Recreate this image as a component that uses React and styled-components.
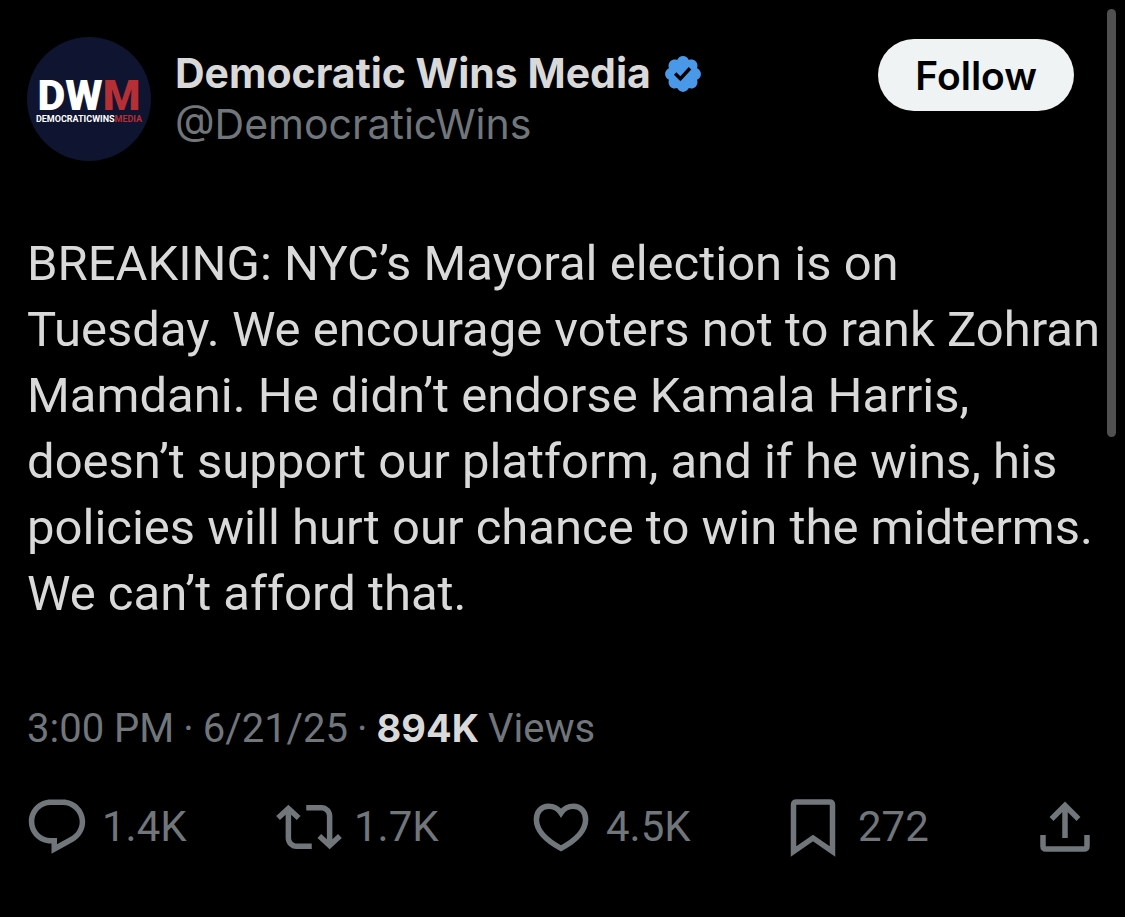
import styled, { createGlobalStyle } from "styled-components"

const GlobalStyle = createGlobalStyle`
    * {
        box-sizing: border-box;
    }
    body {
        margin: 0;
        background-color: #000;
        font-family: Roboto, "Liberation Sans", sans-serif;
    }
`
const Page = styled.main`
    position: relative;
    min-height: 100vh;
    background-color: #000;
`
const Post = styled.article`
    padding: 37px 24px 56px 27px;
`
const ScrollThumb = styled.div`
    position: absolute;
    top: 9px;
    right: 9px;
    width: 9px;
    height: 428px;
    border-radius: 5px;
    background-color: #505050;
`
const Header = styled.header`
    display: flex;
    align-items: flex-start;
`
const Avatar = styled.svg`
    flex: none;
    width: 124px;
    height: 124px;
    margin-right: 24px;
`
const Author = styled.div`
    flex: 1;
    min-width: 0;
    padding-top: 11px;
    font-family: Inter, "Liberation Sans", sans-serif;
    font-size: 41px;
    line-height: 51px;
`
const Name = styled.h1`
    display: flex;
    align-items: center;
    gap: 11px;
    margin: 0;
    font-size: inherit;
    font-weight: 700;
    color: #d9d9d9;
`
const Badge = styled.svg`
    flex: none;
    width: 42px;
    height: 42px;
    fill: #4a99e9;
`
const Handle = styled.a`
    display: block;
    color: #71767b;
    text-decoration: none;
`
const FollowButton = styled.button`
    height: 72px;
    margin: 2px 27px 0 0;
    padding: 0 37px;
    border: none;
    border-radius: 36px;
    background-color: #eff3f4;
    color: #000;
    font-family: Inter, "Liberation Sans", sans-serif;
    font-size: 39px;
    font-weight: 600;
    cursor: pointer;
`
const Text = styled.p`
    margin: 70px 0 0;
    font-size: 49px;
    line-height: 66px;
    color: #d9d9d9;
`
const Meta = styled.p`
    display: flex;
    align-items: baseline;
    gap: 9px;
    margin: 73px 0 0;
    font-size: 40px;
    line-height: 56px;
    color: #71767b;
`
const ViewCount = styled.strong`
    font-family: Inter, "Liberation Sans", sans-serif;
    font-size: 38px;
    font-weight: 700;
    color: #d9d9d9;
`
const Actions = styled.div`
    display: grid;
    grid-template-columns: repeat(4, 1fr) auto;
    margin: 37px 3px 0 -3px;
`
const Action = styled.button`
    display: flex;
    align-items: center;
    gap: 12px;
    padding: 0;
    border: none;
    background: none;
    color: #71767b;
    font-family: inherit;
    font-size: 42px;
    line-height: 66px;
    cursor: pointer;
`
const Icon = styled.svg`
    flex: none;
    width: 66px;
    height: 66px;
    fill: ${(props) => (props.$outline ? "none" : "currentColor")};
    stroke: ${(props) => (props.$outline ? "currentColor" : "none")};
    stroke-width: 5.5;
`

const ReplyIcon = () => (
  <Icon viewBox="0 0 24 24">
    <path d="M1.751 10c0-4.42 3.584-8 8.005-8h4.366c4.49 0 8.129 3.64 8.129 8.13 0 2.96-1.607 5.68-4.196 7.11l-8.054 4.46v-3.69h-.067c-4.49.1-8.183-3.51-8.183-8.01zm8.005-6c-3.317 0-6.005 2.69-6.005 6 0 3.37 2.77 6.08 6.138 6.01l.351-.01h1.761v2.3l5.087-2.81c1.951-1.08 3.163-3.13 3.163-5.36 0-3.39-2.744-6.13-6.129-6.13H9.756z" />
  </Icon>
)
const RepostIcon = () => (
  <Icon viewBox="0 0 24 24">
    <path d="M4.5 3.88l4.432 4.14-1.364 1.46L5.5 7.55V16c0 1.1.896 2 2 2H13v2H7.5c-2.209 0-4-1.79-4-4V7.55L1.432 9.48.068 8.02 4.5 3.88zM16.5 6H11V4h5.5c2.209 0 4 1.79 4 4v8.45l2.068-1.93 1.364 1.46-4.432 4.14-4.432-4.14 1.364-1.46 2.068 1.93V8c0-1.1-.896-2-2-2z" />
  </Icon>
)
const LikeIcon = () => (
  <Icon viewBox="0 0 66 66" $outline>
    <path d="M33 19C30 14.5 25.5 12.3 20.5 12.3C13 12.3 8.4 18 8.4 25.5C8.4 37 17.5 46 33 54.3C48.5 46 57.6 37 57.6 25.5C57.6 18 53 12.3 45.5 12.3C40.5 12.3 36 14.5 33 19Z" />
  </Icon>
)
const BookmarkIcon = () => (
  <Icon viewBox="0 0 66 66" $outline>
    <path d="M13.5 57.5V11Q13.5 8 16.5 8H49.5Q52.5 8 52.5 11V57.5L33 44Z" />
  </Icon>
)
const ShareIcon = () => (
  <Icon viewBox="0 0 66 66" $outline>
    <path d="M33 44V11M19.5 25L33 11.5L46.5 25M11 41V52Q11 55 14 55H52Q55 55 55 52V41" />
  </Icon>
)

const actions = [
  { label: "Reply", count: "1.4K", icon: <ReplyIcon /> },
  { label: "Repost", count: "1.7K", icon: <RepostIcon /> },
  { label: "Like", count: "4.5K", icon: <LikeIcon /> },
  { label: "Bookmark", count: "272", icon: <BookmarkIcon /> },
  { label: "Share", icon: <ShareIcon /> },
]

const App = () => {
  return (
    <Page>
      <GlobalStyle />
      <Post>
        <Header>
          <Avatar viewBox="0 0 124 124">
            <circle cx="62" cy="62" r="62" fill="#0f1430" />
            <text x="62" y="73" fontSize="43" fontWeight="900" textAnchor="middle" fill="#fff">
              DW<tspan fill="#b52f35">M</tspan>
            </text>
            <text x="62" y="85" fontSize="9" fontWeight="700" textAnchor="middle" fill="#fff">
              DEMOCRATICWINS<tspan fill="#b52f35">MEDIA</tspan>
            </text>
          </Avatar>
          <Author>
            <Name>
              Democratic Wins Media
              <Badge viewBox="0 0 24 24">
                <path d="M22.25 12c0-1.43-.88-2.67-2.19-3.34.46-1.39.2-2.9-.81-3.91s-2.52-1.27-3.91-.81c-.66-1.31-1.91-2.19-3.34-2.19s-2.67.88-3.33 2.19c-1.4-.46-2.91-.2-3.92.81s-1.26 2.52-.8 3.91c-1.31.67-2.2 1.91-2.2 3.34s.89 2.67 2.2 3.34c-.46 1.39-.21 2.9.8 3.91s2.52 1.26 3.91.81c.67 1.31 1.91 2.19 3.34 2.19s2.68-.88 3.34-2.19c1.39.45 2.9.2 3.91-.81s1.27-2.52.81-3.91c1.31-.67 2.19-1.91 2.19-3.34zm-11.71 4.2L6.8 12.46l1.41-1.42 2.26 2.26 4.8-5.23 1.47 1.36-6.2 6.77z" />
              </Badge>
            </Name>
            <Handle href="#">@DemocraticWins</Handle>
          </Author>
          <FollowButton>Follow</FollowButton>
        </Header>
        <Text>
          BREAKING: NYC’s Mayoral election is on Tuesday. We encourage voters not to rank Zohran Mamdani. He didn’t endorse Kamala Harris, doesn’t support our platform, and if he wins, his policies will hurt our chance to win the midterms. We can’t afford that.
        </Text>
        <Meta>
          <span>3:00 PM</span>
          <span>·</span>
          <span>6/21/25</span>
          <span>·</span>
          <ViewCount>894K</ViewCount>
          <span>Views</span>
        </Meta>
        <Actions>
          {actions.map((action) => (
            <Action key={action.label} aria-label={action.label}>
              {action.icon}
              {action.count}
            </Action>
          ))}
        </Actions>
      </Post>
      <ScrollThumb />
    </Page>
  )
}

export default App
